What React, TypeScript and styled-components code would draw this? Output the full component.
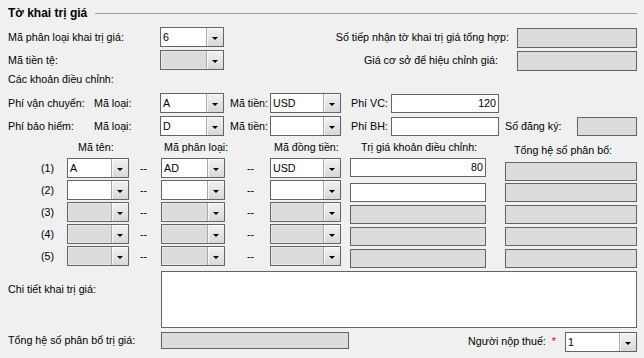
import React from "react";
import styled, { createGlobalStyle } from "styled-components";

const GlobalStyle = createGlobalStyle`
  html, body {
    margin: 0;
    padding: 0;
    background: #f0f0f0;
  }
  body {
    font-family: "Liberation Sans", Arial, sans-serif;
    font-size: 10.7px;
    color: #000;
  }
`;

const Page = styled.div`
  width: 644px;
  height: 358px;
  box-sizing: border-box;
  padding: 5px 7px 0 8px;
  background: #f0f0f0;
  overflow: hidden;
`;

const TitleRow = styled.div`
  display: flex;
  align-items: center;
  height: 16px;
  gap: 8px;
`;

const Title = styled.span`
  font-size: 12px;
  font-weight: bold;
  white-space: nowrap;
`;

const TitleLine = styled.div`
  flex: 1;
  height: 1px;
  background: #a0a0a0;
`;

const Row = styled.div<{ $mt: number; $h?: number; $align?: string }>`
  display: flex;
  align-items: ${(p) => p.$align ?? "center"};
  height: ${(p) => p.$h ?? 20}px;
  margin-top: ${(p) => p.$mt}px;
`;

const Label = styled.span<{ $w?: number; $ml?: number; $mr?: number; $pt?: number }>`
  ${(p) => (p.$w ? `width: ${p.$w}px; flex: none;` : "")}
  margin-left: ${(p) => p.$ml ?? 0}px;
  margin-right: ${(p) => p.$mr ?? 0}px;
  padding-top: ${(p) => p.$pt ?? 0}px;
  white-space: nowrap;
`;

const Spacer = styled.div`
  flex: 1;
`;

const Star = styled.span`
  color: #e81123;
  margin: 0 9px 0 6px;
  padding-top: 3px;
`;

const ComboBox = styled.div<{ $w: number; $disabled?: boolean }>`
  width: ${(p) => p.$w}px;
  height: 20px;
  box-sizing: border-box;
  border: 1px solid #646464;
  background: ${(p) => (p.$disabled ? "#dcdcdc" : "#fff")};
  box-shadow: ${(p) => (p.$disabled ? "inset 1px 1px 0 #e8e8e8, inset -1px -1px 0 #e8e8e8" : "none")};
  display: flex;
  flex: none;
`;

const ComboText = styled.span`
  flex: 1;
  padding-left: 2px;
  line-height: 18px;
  overflow: hidden;
  white-space: nowrap;
`;

const DropButton = styled.span`
  width: 16px;
  border-left: 1px solid #a8a8a8;
  background: linear-gradient(#f2f2f2, #d8d8d8);
  box-shadow: inset 1px 1px 0 #fafafa;
  display: flex;
  align-items: center;
  justify-content: center;
`;

const Arrow = styled.span`
  width: 0;
  height: 0;
  margin-top: 2px;
  border-left: 3px solid transparent;
  border-right: 3px solid transparent;
  border-top: 3px solid #000;
`;

const TextBox = styled.div<{
  $w: number;
  $h?: number;
  $disabled?: boolean;
  $right?: boolean;
  $mt?: number;
}>`
  width: ${(p) => p.$w}px;
  height: ${(p) => p.$h ?? 20}px;
  margin-top: ${(p) => p.$mt ?? 0}px;
  box-sizing: border-box;
  flex: none;
  border: 1px solid #646464;
  background: ${(p) => (p.$disabled ? "#dcdcdc" : "#fff")};
  padding: 0 2px;
  text-align: ${(p) => (p.$right ? "right" : "left")};
  line-height: ${(p) => (p.$h ?? 20) - 2}px;
  justify-self: end;
`;

const Table = styled.div`
  display: grid;
  grid-template-columns: 59px 62px 32px 64px 45px 71px 145px 151px;
  grid-template-rows: 15px repeat(5, 20px);
  row-gap: 2px;
  margin-top: 5px;
  align-items: start;
`;

const HeadCell = styled.span<{ $col: number; $pl?: number; $pt?: number }>`
  grid-column: ${(p) => p.$col};
  grid-row: 1;
  padding-left: ${(p) => p.$pl ?? 0}px;
  padding-top: ${(p) => p.$pt ?? 0}px;
  white-space: nowrap;
`;

const RowNo = styled.span`
  grid-column: 1;
  padding-left: 33px;
  line-height: 20px;
`;

const Dash = styled.span<{ $pl: number }>`
  padding-left: ${(p) => p.$pl}px;
  line-height: 20px;
`;

type ComboProps = { w: number; value?: string; disabled?: boolean };

const Combo = ({ w, value, disabled }: ComboProps) => (
  <ComboBox $w={w} $disabled={disabled}>
    <ComboText>{value}</ComboText>
    <DropButton>
      <Arrow />
    </DropButton>
  </ComboBox>
);

const rows = [
  { no: "(1)", a: "A", b: "AD", c: "USD", v: "80", on: true },
  { no: "(2)", a: "", b: "", c: "", v: "", on: true },
  { no: "(3)", a: "", b: "", c: "", v: "", on: false },
  { no: "(4)", a: "", b: "", c: "", v: "", on: false },
  { no: "(5)", a: "", b: "", c: "", v: "", on: false },
];

export default function App() {
  return (
    <Page>
      <GlobalStyle />
      <TitleRow>
        <Title>Tờ khai trị giá</Title>
        <TitleLine />
      </TitleRow>

      <Row $mt={6}>
        <Label $w={152}>Mã phân loại khai trị giá:</Label>
        <Combo w={64} value="6" />
        <Spacer />
        <Label $mr={8}>Số tiếp nhận tờ khai trị giá tổng hợp:</Label>
        <TextBox $w={120} $disabled $mt={2} />
      </Row>
      <Row $mt={3}>
        <Label $w={152}>Mã tiền tệ:</Label>
        <Combo w={64} disabled />
        <Spacer />
        <Label $mr={19}>Giá cơ sở để hiệu chỉnh giá:</Label>
        <TextBox $w={120} $disabled $mt={2} />
      </Row>
      <Row $mt={2} $h={14}>
        <Label>Các khoản điều chỉnh:</Label>
      </Row>

      <Row $mt={7}>
        <Label $w={86}>Phí vận chuyển:</Label>
        <Label $w={66}>Mã loại:</Label>
        <Combo w={64} value="A" />
        <Label $w={40} $ml={6}>
          Mã tiền:
        </Label>
        <Combo w={71} value="USD" />
        <Label $w={40} $ml={10}>
          Phí VC:
        </Label>
        <TextBox $w={108} $h={19} $right>
          120
        </TextBox>
      </Row>
      <Row $mt={3}>
        <Label $w={86}>Phí bảo hiểm:</Label>
        <Label $w={66}>Mã loại:</Label>
        <Combo w={64} value="D" />
        <Label $w={40} $ml={6}>
          Mã tiền:
        </Label>
        <Combo w={71} />
        <Label $w={40} $ml={10}>
          Phí BH:
        </Label>
        <TextBox $w={108} $h={19} />
        <Label $w={72} $ml={6}>
          Số đăng ký:
        </Label>
        <TextBox $w={60} $h={19} $disabled />
      </Row>

      <Table>
        <HeadCell $col={1} />
        <HeadCell $col={2} $pl={11}>
          Mã tên:
        </HeadCell>
        <HeadCell $col={3} />
        <HeadCell $col={4} $pl={3}>
          Mã phân loại:
        </HeadCell>
        <HeadCell $col={5} />
        <HeadCell $col={6} $pl={4}>
          Mã đồng tiền:
        </HeadCell>
        <HeadCell $col={7} $pl={20}>
          Trị giá khoản điều chỉnh:
        </HeadCell>
        <HeadCell $col={8} $pl={28} $pt={3}>
          Tổng hệ số phân bổ:
        </HeadCell>
        {rows.map((r, i) => (
          <React.Fragment key={r.no}>
            <RowNo>{r.no}</RowNo>
            <Combo w={62} value={r.a} disabled={!r.on} />
            <Dash $pl={11}>--</Dash>
            <Combo w={64} value={r.b} disabled={!r.on} />
            <Dash $pl={22}>--</Dash>
            <Combo w={71} value={r.c} disabled={!r.on} />
            <TextBox $w={136} $h={19} $mt={i === 0 ? 0 : 3} $right $disabled={!r.on}>
              {r.v}
            </TextBox>
            <TextBox $w={132} $h={19} $mt={i === 0 ? 4 : 3} $disabled />
          </React.Fragment>
        ))}
      </Table>

      <Row $mt={5} $h={57} $align="flex-start">
        <Label $w={153} $pt={12}>
          Chi tiết khai trị giá:
        </Label>
        <TextBox $w={476} $h={57} />
      </Row>
      <Row $mt={4} $align="flex-start">
        <Label $w={153} $pt={2}>
          Tổng hệ số phân bổ trị giá:
        </Label>
        <TextBox $w={188} $h={17} $disabled />
        <Spacer />
        <Label $pt={3}>Người nộp thuế:</Label>
        <Star>*</Star>
        <Combo w={72} value="1" />
      </Row>
    </Page>
  );
}
